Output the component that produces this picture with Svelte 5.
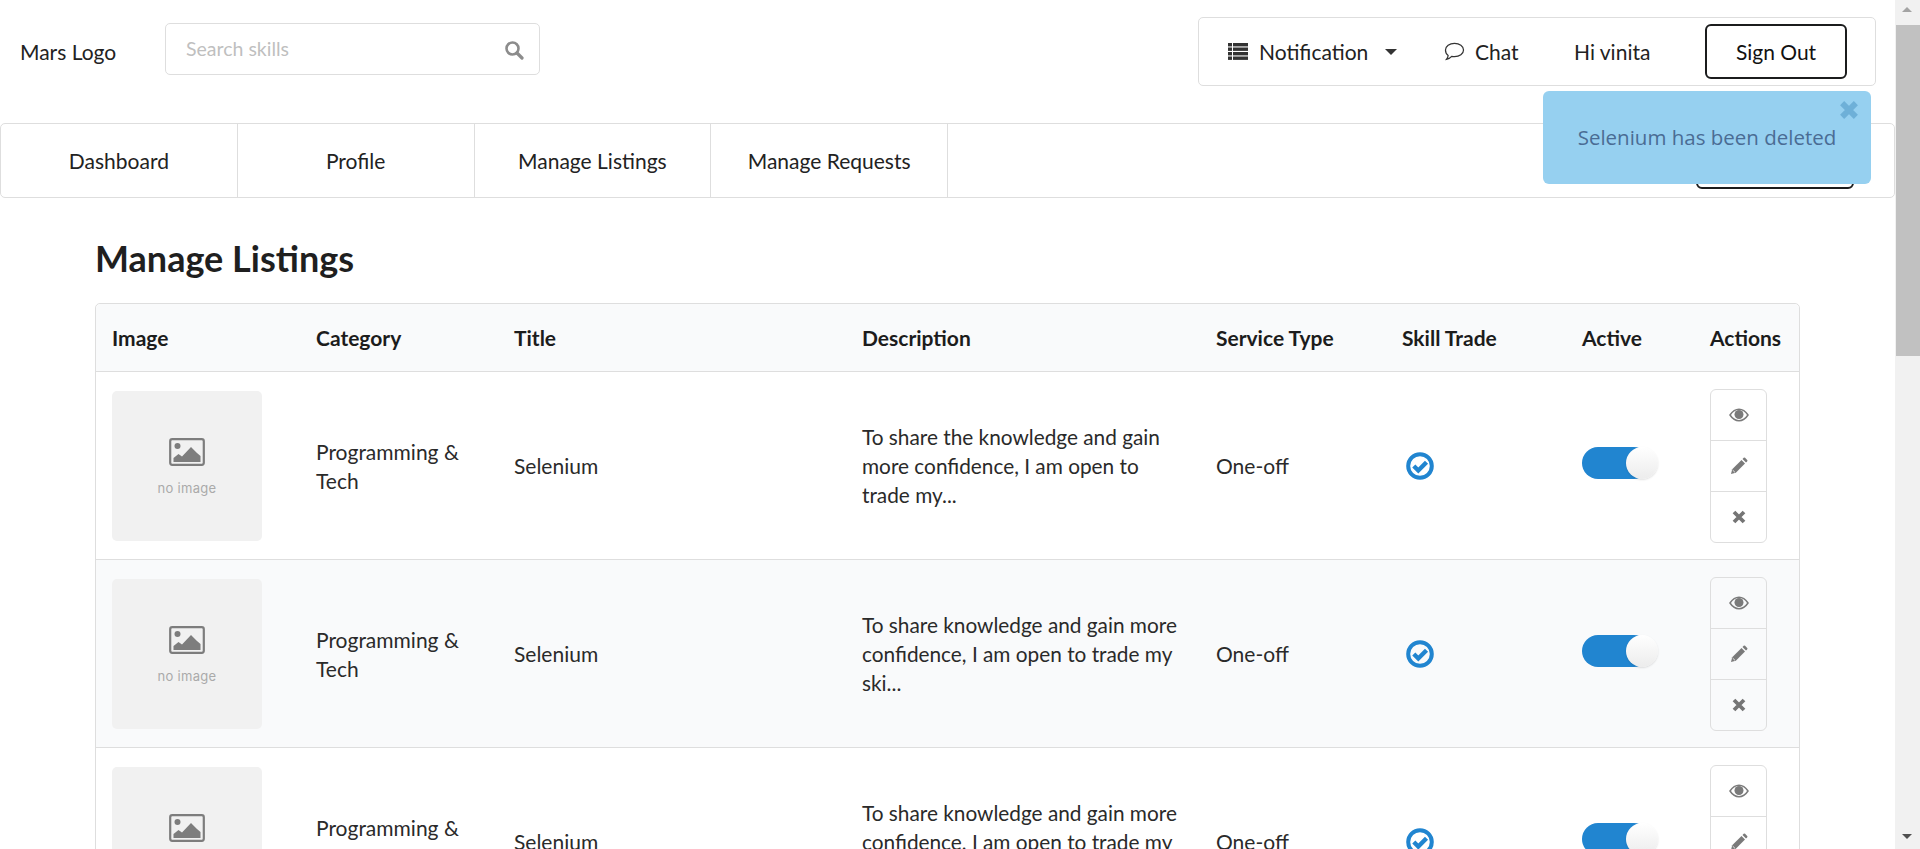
<script>
  const rows = [
    { desc: 'To share the knowledge and gain more confidence, I am open to trade my...' },
    { desc: 'To share knowledge and gain more confidence, I am open to trade my ski...' },
    { desc: 'To share knowledge and gain more confidence, I am open to trade my ski...' }
  ];
  const heads = ['Image', 'Category', 'Title', 'Description', 'Service Type', 'Skill Trade', 'Active', 'Actions'];
</script>

<div class="shell">
  <div class="page">
    <header class="top">
      <span class="logo">Mars Logo</span>
      <div class="search">
        <span class="ph">Search skills</span>
        <svg class="sicon" viewBox="0 0 20 20" width="20" height="20"><circle cx="8.5" cy="8.5" r="6" fill="none" stroke="#8c8c8c" stroke-width="2.6"/><path d="M13 13l5 5" stroke="#8c8c8c" stroke-width="3.2" stroke-linecap="round"/></svg>
      </div>
      <div class="menu">
        <div class="mi notif">
          <svg viewBox="0 0 20 17" width="20" height="17"><g fill="#333"><rect x="0" y="0" width="4" height="3.4"/><rect x="0" y="4.5" width="4" height="3.4"/><rect x="0" y="9" width="4" height="3.4"/><rect x="0" y="13.5" width="4" height="3.4"/><rect x="5" y="0" width="15" height="3.4"/><rect x="5" y="4.5" width="15" height="3.4"/><rect x="5" y="9" width="15" height="3.4"/><rect x="5" y="13.5" width="15" height="3.4"/></g></svg>
          <span>Notification</span>
          <i class="caret"></i>
        </div>
        <div class="mi chat">
          <svg viewBox="0 0 22 20" width="21" height="19"><path d="M11 1.5c5.3 0 9.500 3 9.500 7s-4.200 7-9.500 7c-1 0-2-.1-2.900-.3C6.500 17 4.500 18 2.500 18.300c1-1.200 1.700-2.500 1.800-4.100C2.400 12.900 1.500 10.800 1.500 8.500c0-4 4.200-7 9.500-7z" fill="none" stroke="#333" stroke-width="1.300"/></svg>
          <span>Chat</span>
        </div>
        <div class="mi hi">Hi vinita</div>
        <button class="signout">Sign Out</button>
      </div>
    </header>

    <nav class="nav">
      <a href="#a">Dashboard</a>
      <a href="#a">Profile</a>
      <a href="#a">Manage Listings</a>
      <a href="#a">Manage Requests</a>
      <button class="share">Share Skill</button>
    </nav>

    <div class="toast">
      <svg class="tx" viewBox="0 0 16 16" width="20" height="20"><path d="M2.500 2.500l11 11M13.500 2.500l-11 11" stroke="#6eb0d8" stroke-width="4.600"/></svg>
      <span>Selenium has been deleted</span>
    </div>

    <main class="content">
      <h2>Manage Listings</h2>
      <table>
        <thead>
          <tr>{#each heads as h}<th>{h}</th>{/each}</tr>
        </thead>
        <tbody>
          {#each rows as r}
            <tr>
              <td>
                <div class="noimg">
                  <svg viewBox="0 0 36 28" width="36" height="28"><rect x="1.200" y="1.200" width="33.600" height="25.600" rx="2" fill="none" stroke="#7d7d7d" stroke-width="2.200"/><circle cx="8.500" cy="8" r="3" fill="#7d7d7d"/><path d="M4.500 24v-4l5-4 3.500 2.500L22 9l6 6 3.500 3v6z" fill="#7d7d7d"/></svg>
                  <span>no image</span>
                </div>
              </td>
              <td>Programming &amp; Tech</td>
              <td>Selenium</td>
              <td class="desc">{r.desc}</td>
              <td>One-off</td>
              <td>
                <svg class="check" viewBox="0 0 28 28" width="28" height="28"><circle cx="14" cy="14" r="11.800" fill="none" stroke="#2185d0" stroke-width="4"/><path d="M7.800 14l4.500 4.500L20.500 10.300" fill="none" stroke="#2185d0" stroke-width="4.400"/></svg>
              </td>
              <td><div class="toggle"><i></i></div></td>
              <td>
                <div class="actions">
                  <div class="act">
                    <svg viewBox="0 0 20 14" width="20" height="14"><path d="M1 7c2.500-3.800 5.500-5.800 9-5.800s6.500 2 9 5.800c-2.500 3.800-5.500 5.800-9 5.800S3.500 10.800 1 7z" fill="none" stroke="#7a7a7a" stroke-width="1.500"/><circle cx="10" cy="6.500" r="4.500" fill="#7a7a7a"/></svg>
                  </div>
                  <div class="act">
                    <svg viewBox="0 0 18 18" width="18" height="18"><path d="M1 17l1.200-4.800L11.500 3l3.500 3.500L5.800 15.800z" fill="#7a7a7a"/><path d="M12.500 2l1.200-1.200a1 1 0 0 1 1.400 0l2.100 2.100a1 1 0 0 1 0 1.400L16 5.500z" fill="#7a7a7a"/><path d="M2.600 13l2.400 2.400" stroke="#fff" stroke-width=".8"/></svg>
                  </div>
                  <div class="act">
                    <svg viewBox="0 0 14 14" width="14" height="14"><path d="M2 2l10 10M12 2L2 12" stroke="#757575" stroke-width="3.800"/></svg>
                  </div>
                </div>
              </td>
            </tr>
          {/each}
        </tbody>
      </table>
    </main>
  </div>

  <aside class="scrollbar">
    <i class="up"></i>
    <div class="thumb"></div>
    <i class="down"></i>
  </aside>
</div>

<style>
  :global(body) { margin: 0; overflow: hidden; background: #fff; }
  .shell {
    display: flex;
    height: 100vh;
    overflow: hidden;
    font-family: Lato, "Liberation Sans", sans-serif;
    font-size: 21px;
    line-height: 29px;
    color: #222;
  }
  .page { position: relative; width: 1895px; flex: none; overflow: hidden; }

  .top { display: flex; align-items: flex-start; height: 123px; box-sizing: border-box; padding: 17px 19px 0 20px; }
  .logo { margin-top: 20px; width: 145px; flex: none; }
  .search {
    width: 375px; height: 52px; margin-top: 6px; box-sizing: border-box;
    border: 1px solid #dedede; border-radius: 5px;
    display: flex; align-items: center; justify-content: space-between;
    padding: 0 15px 0 20px;
  }
  .ph { color: #bfbfbf; font-size: 19.500px; margin-top: -2px; }
  .sicon { margin-top: 2px; }
  .menu {
    margin-left: auto; width: 678px; height: 69px; box-sizing: border-box;
    border: 1px solid #dedede; border-radius: 5px;
    display: flex; align-items: center; padding-left: 29px;
  }
  .mi { display: flex; align-items: center; }
  .notif { gap: 11px; width: 216px; flex: none; }
  .caret { width: 0; height: 0; border: 6px solid transparent; border-top-color: #333; border-bottom: 0; margin-left: 6px; }
  .chat { gap: 10px; width: 130px; flex: none; }
  .hi { width: 131px; flex: none; }
  .signout {
    width: 142px; height: 55px; box-sizing: border-box; background: #fff;
    border: 2px solid #1b1c1d; border-radius: 6px; font: inherit; color: #111; padding: 0;
  }

  .nav {
    display: flex; position: relative; height: 75px; box-sizing: border-box;
    border: 1px solid #dedede; border-radius: 5px;
  }
  .nav a {
    width: 236.750px; flex: none; box-sizing: border-box; border-right: 1px solid #dedede;
    display: flex; align-items: center; justify-content: center;
    color: #222; text-decoration: none;
  }
  .share {
    position: absolute; right: 40px; top: 8px; width: 158px; height: 57px; box-sizing: border-box;
    background: #fff; border: 2px solid #1b1c1d; border-radius: 6px; font: inherit;
  }

  .toast {
    position: absolute; left: 1543px; top: 91px; width: 328px; height: 93px;
    box-sizing: border-box; background: #96d0f0; border-radius: 6px;
    display: flex; align-items: center; justify-content: center;
    color: #4a6c94; font-family: "Open Sans", sans-serif; font-size: 20.500px;
  }
  .tx { position: absolute; right: 12px; top: 9px; }

  .content { padding: 0 95px; }
  h2 { margin: 0; height: 105px; box-sizing: border-box; padding-top: 39px; font-size: 36px; line-height: 42px; font-weight: 700; color: #1f1f1f; }

  table {
    width: 100%; table-layout: fixed; border-collapse: separate; border-spacing: 0;
    border: 1px solid #dedede; border-radius: 5px;
  }
  th {
    height: 68px; box-sizing: border-box; background: #f9fafb; text-align: left; font-weight: 700;
    padding: 0 16px; border-bottom: 1px solid #dedede; color: #1c1c1c;
  }
  th:first-child { border-top-left-radius: 5px; }
  th:last-child { border-top-right-radius: 5px; padding: 0 0 0 16px; }
  th:nth-child(1) { width: 204px; }
  th:nth-child(2) { width: 198px; }
  th:nth-child(3) { width: 348px; }
  th:nth-child(4) { width: 354px; }
  th:nth-child(5) { width: 186px; }
  th:nth-child(6) { width: 180px; }
  th:nth-child(7) { width: 128px; }
  th:nth-child(8) { width: 105px; }
  td { height: 188px; box-sizing: border-box; padding: 0 16px; vertical-align: middle; border-top: 1px solid #dedede; color: #2a2a2a; }
  td.desc { font-size: 20.800px; }
  tbody tr:first-child td { border-top: 0; height: 187px; }
  tbody tr:nth-child(2) td { background: #f9fafb; }

  .noimg {
    width: 150px; height: 150px; background: #f1f1f1; border-radius: 5px;
    display: flex; flex-direction: column; align-items: center; justify-content: center;
  }
  .noimg span { font-family: Inter, sans-serif; font-size: 13px; line-height: 16px; color: #aaa; margin-top: 14px; letter-spacing: .3px; }
  .noimg svg { margin-top: 3px; }
  .check { display: block; margin-left: 4px; }
  .toggle { position: relative; width: 68px; height: 32px; background: #2185d0; border-radius: 16px; margin-bottom: 5px; }
  .toggle i {
    position: absolute; left: 44px; top: 0; width: 32px; height: 32px; border-radius: 50%;
    background: linear-gradient(to bottom, #fff, #ececec); box-shadow: 0 1px 2px rgba(0,0,0,.12);
  }
  .actions { width: 57px; height: 154px; box-sizing: border-box; border: 1px solid #dedede; border-radius: 6px; background: #fff; display: flex; flex-direction: column; }
  tbody tr:nth-child(2) .actions { background: #f9fafb; }
  .act { flex: 1; display: flex; align-items: center; justify-content: center; }
  .act + .act { border-top: 1px solid #dedede; }

  .scrollbar { position: relative; width: 25px; flex: none; background: #f1f1f1; }
  .thumb { position: absolute; left: 1px; right: 0; top: 25px; height: 331px; background: #c1c1c1; }
  .up, .down { position: absolute; left: 7px; width: 0; height: 0; border: 5.500px solid transparent; }
  .up { top: 7px; border-top: 0; border-bottom-color: #a3a3a3; }
  .down { bottom: 10px; border-bottom: 0; border-top-color: #505050; }
</style>
